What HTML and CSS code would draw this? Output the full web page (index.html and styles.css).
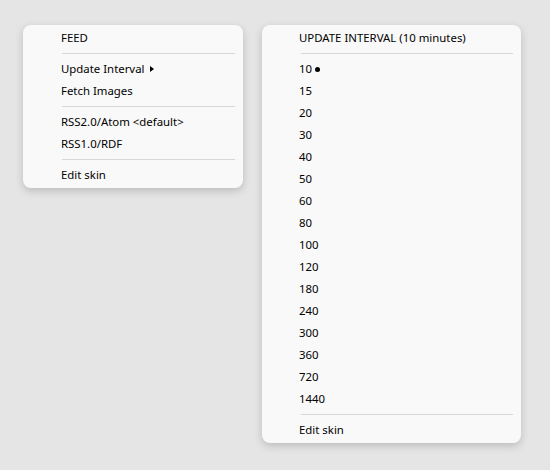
FILE: index.html
```html
<!DOCTYPE html>
<html>
<head>
<meta charset="utf-8">
<link rel="stylesheet" href="styles.css">
</head>
<body>
<div class="desk">
  <div class="menu menu-main">
    <div class="item">FEED</div>
    <div class="sep"></div>
    <div class="item">Update Interval <span class="arrow"></span></div>
    <div class="item">Fetch Images</div>
    <div class="sep"></div>
    <div class="item">RSS2.0/Atom &lt;default&gt;</div>
    <div class="item">RSS1.0/RDF</div>
    <div class="sep"></div>
    <div class="item">Edit skin</div>
  </div>
  <div class="menu menu-sub">
    <div class="item">UPDATE INTERVAL (10 minutes)</div>
    <div class="sep"></div>
    <div class="item">10 <span class="dot"></span></div>
    <div class="item">15</div>
    <div class="item">20</div>
    <div class="item">30</div>
    <div class="item">40</div>
    <div class="item">50</div>
    <div class="item">60</div>
    <div class="item">80</div>
    <div class="item">100</div>
    <div class="item">120</div>
    <div class="item">180</div>
    <div class="item">240</div>
    <div class="item">300</div>
    <div class="item">360</div>
    <div class="item">720</div>
    <div class="item">1440</div>
    <div class="sep"></div>
    <div class="item">Edit skin</div>
  </div>
</div>
</body>
</html>
```
FILE: styles.css
```css
html, body {
  margin: 0;
  padding: 0;
  background: #e5e5e5;
  width: 550px;
  height: 470px;
  overflow: hidden;
}
.desk {
  display: flex;
  align-items: flex-start;
  gap: 19px;
  padding: 25px 0 0 23px;
  font-family: "Noto Sans", "Open Sans", sans-serif;
  font-size: 11.4px;
  color: #000;
}
.menu {
  background: #f9f9f9;
  border-radius: 8px;
  box-shadow: 0 3px 9px rgba(0, 0, 0, 0.18);
  padding: 2px 0;
  display: flex;
  flex-direction: column;
}
.menu-main { width: 220px; }
.menu-sub { width: 259px; }
.item {
  height: 22px;
  line-height: 22px;
  padding-left: 38px;
  display: flex;
  align-items: center;
  white-space: nowrap;
}
.menu-sub .item { padding-left: 37px; }
.sep {
  height: 1px;
  background: #d7d7d7;
  margin: 4px 8px 4px 39px;
}
.arrow {
  width: 0;
  height: 0;
  border-top: 3.5px solid transparent;
  border-bottom: 3.5px solid transparent;
  border-left: 4px solid #000;
  margin-left: 6px;
}
.dot {
  width: 5px;
  height: 5px;
  border-radius: 50%;
  background: #000;
  margin-left: 3px;
}
```
